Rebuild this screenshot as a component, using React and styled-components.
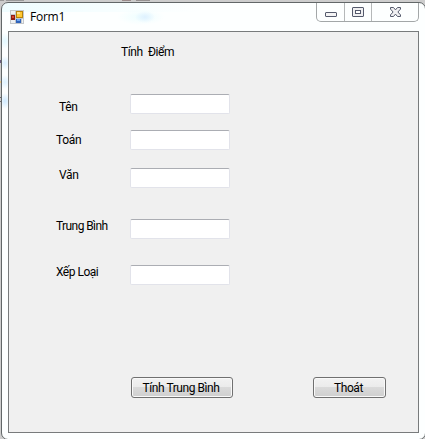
import React from 'react';
import styled, { createGlobalStyle } from 'styled-components';

const Global = createGlobalStyle`
  * { box-sizing: border-box; }
  html, body { margin: 0; height: 100%; overflow: hidden; }
  body { font-family: 'Open Sans', 'Noto Sans', sans-serif; color: #000; }
`;

const Desktop = styled.div`
  width: 425px;
  height: 439px;
  overflow: hidden;
  padding: 2px 0 0 1px;
  background:
    linear-gradient(#6b6b70, #6b6b70) 0 97px / 2px 1px no-repeat,
    linear-gradient(#6b6b70, #6b6b70) 0 101px / 2px 1px no-repeat,
    linear-gradient(#e0c48c, #e0c48c) 0 81px / 1px 2px no-repeat,
    linear-gradient(#6a5a80, #6a5a80) 0 60px / 1px 3px no-repeat,
    linear-gradient(90deg, #999 0 4px, #c9c9c9 4px 6px, #999 6px 24px, transparent 24px) 0 0 / 30px 1px no-repeat,
    linear-gradient(90deg, #9a8a8a 0 9px, #c9c9c9 9px 14px, #959090 14px 28px, transparent 28px) 122px 0 / 30px 1px no-repeat,
    #cdcdcd;
`;

const Window = styled.div`
  width: 425px;
  height: 438px;
  border: 1px solid #626768;
  border-radius: 7px;
  background:
    radial-gradient(ellipse 10px 6px at 143px 14px, #def1ff, transparent),
    radial-gradient(ellipse 24px 8px at 139px 14px, #eefeff, transparent),
    radial-gradient(ellipse 6px 8px at 3px 38px, #e2f8ff, transparent),
    radial-gradient(ellipse 6px 7px at 3px 60px, #d9eeff, transparent),
    radial-gradient(ellipse 6px 7px at 3px 79px, #dcf1ff, transparent),
    radial-gradient(ellipse 6px 8px at 3px 98px, #cfeaff, transparent),
    linear-gradient(90deg, #effdff, transparent 200px) 0 0 / 100% 9px no-repeat,
    #fdffff;
`;

const TitleBar = styled.header`
  display: flex;
  height: 28px;
  padding-left: 8px;
`;

const AppIcon = styled.svg`
  display: block;
  margin-top: 7px;
`;

const Title = styled.h1`
  margin: 4px auto 0 6px;
  font-size: 12px;
  font-weight: 400;
  line-height: 20px;
  letter-spacing: -0.25px;
`;

const Caption = styled.div`
  display: flex;
  width: 103px;
  height: 19px;
  margin-right: 6px;
  border: 1px solid #a3a7a8;
  border-top: 0;
  border-radius: 0 0 5px 5px;
`;

const CaptionButton = styled.button`
  width: ${(p) => p.$width}px;
  height: 18px;
  padding: 0;
  border: 0;
  border-left: ${(p) => (p.$first ? '0' : '1px solid #b5b8b9')};
  background: none;
  svg { display: block; }
`;

const Client = styled.main`
  width: 411px;
  height: 402px;
  margin-left: 6px;
  border: 1px solid #787b7c;
  background: #f0f0f0;
  font-family: Roboto, 'Noto Sans', sans-serif;
  font-size: 12px;
  line-height: 16px;
`;

const Heading = styled.h2`
  margin: 12px 0 34px 112px;
  font-size: inherit;
  font-weight: 400;
  line-height: 16px;
  white-space: pre;
  letter-spacing: ${(p) => p.$spacing}px;
`;

const Row = styled.label`
  display: flex;
  align-items: flex-start;
  height: 20px;
  margin-bottom: ${(p) => p.$gap}px;
`;

const RowText = styled.span`
  width: 121px;
  margin-top: ${(p) => p.$drop}px;
  padding-left: ${(p) => p.$indent}px;
  letter-spacing: ${(p) => p.$spacing}px;
  white-space: nowrap;
`;

const Input = styled.input`
  width: 100px;
  height: 20px;
  padding: 1px 3px;
  border: 1px solid #e2e3ea;
  border-top-color: #abadb3;
  border-radius: 2px;
  background: #fff;
  font: inherit;
  outline: 0;
`;

const Actions = styled.div`
  display: flex;
  gap: 80px;
  padding-left: 122px;
`;

const Button = styled.button`
  width: ${(p) => p.$width}px;
  height: 21px;
  padding: 1px 2px 0 0;
  border: 1px solid #707070;
  border-radius: 3px;
  background: linear-gradient(#f2f2f2 0%, #ebebeb 49%, #dadada 50%, #cfcfcf 100%);
  box-shadow: inset 0 0 0 1px #f9f9f9;
  color: #000;
  font: inherit;
  line-height: 18px;
  letter-spacing: ${(p) => p.$spacing}px;
`;

const rows = [
  { text: 'Tên', indent: 50, drop: 5, gap: 16, spacing: -0.35 },
  { text: 'Toán', indent: 47, drop: 2, gap: 18, spacing: -0.35 },
  { text: 'Văn', indent: 50, drop: -1, gap: 31, spacing: -0.35 },
  { text: 'Trung Bình', indent: 47, drop: -1, gap: 26, spacing: -0.6 },
  { text: 'Xếp Loại', indent: 47, drop: -1, gap: 92, spacing: -0.5 },
];

function FormIcon() {
  return (
    <AppIcon width="14" height="14" viewBox="0 0 14 14" shapeRendering="crispEdges">
      <path fill="#c3c7ca" d="M0 0h14v14H0z" />
      <path fill="#eef1f3" d="M1 1h4v3H1zM1 10h4v3H1zM12 9h1v4h-1z" />
      <path fill="#8f1d12" d="M1 5h4v5H1z" />
      <path fill="#d9442d" d="M2 6h2v2H2z" />
      <path fill="#b88108" d="M6 1h7v7H6z" />
      <path fill="#ffc832" d="M7 2h5v5H7z" />
      <path fill="#ffe28a" d="M7 2h3v2H7z" />
      <path fill="#2f64bb" d="M6 9h5v4H6z" />
      <path fill="#6ea4ef" d="M7 9h3v2H7z" />
    </AppIcon>
  );
}

export default function App() {
  return (
    <>
      <Global />
      <Desktop>
        <Window>
          <TitleBar>
            <FormIcon />
            <Title>Form1</Title>
            <Caption>
              <CaptionButton $width={27} $first aria-label="Minimize">
                <svg width="27" height="18">
                  <rect x="8.5" y="9.5" width="11" height="4" rx="0.5" fill="#f4f4f5" stroke="#555a6c" />
                </svg>
              </CaptionButton>
              <CaptionButton $width={27} aria-label="Maximize">
                <svg width="26" height="18">
                  <rect x="7.5" y="4.5" width="11" height="9" rx="0.5" fill="#f0f0f2" stroke="#555a6c" />
                  <rect x="10.5" y="7.5" width="5" height="3" fill="#fff" stroke="#555a6c" />
                </svg>
              </CaptionButton>
              <CaptionButton $width={47} aria-label="Close">
                <svg width="46" height="18">
                  <path
                    d="M18.5 4.5h3l2 2.4 2-2.4h3v1.6L25.9 9l2.6 2.9v1.6h-3l-2-2.4-2 2.4h-3v-1.6L21.1 9l-2.6-2.9z"
                    fill="#f0f0f2"
                    stroke="#555a6c"
                    strokeLinejoin="round"
                  />
                </svg>
              </CaptionButton>
            </Caption>
          </TitleBar>
          <Client>
            <Heading $spacing={-0.4}>{'Tính  Điểm'}</Heading>
            {rows.map((r) => (
              <Row key={r.text} $gap={r.gap}>
                <RowText $indent={r.indent} $drop={r.drop} $spacing={r.spacing}>
                  {r.text}
                </RowText>
                <Input type="text" />
              </Row>
            ))}
            <Actions>
              <Button type="button" $width={102} $spacing={-0.45}>Tính Trung Bình</Button>
              <Button type="button" $width={73} $spacing={-0.45}>Thoát</Button>
            </Actions>
          </Client>
        </Window>
      </Desktop>
    </>
  );
}
